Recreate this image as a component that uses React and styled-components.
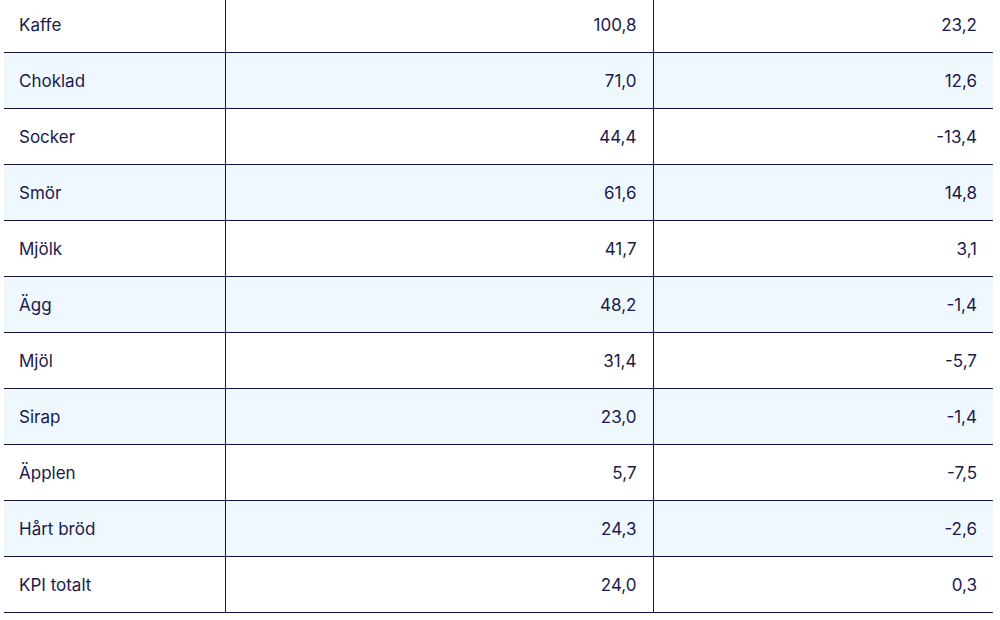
import React from "react";
import styled, { createGlobalStyle } from "styled-components";

const GlobalStyle = createGlobalStyle`
  body {
    margin: 0;
    background: #ffffff;
    font-family: Inter, "Noto Sans", sans-serif;
  }
`;

const Wrapper = styled.div`
  padding: 0 7px 0 4px;
  margin-top: -4px;
`;

const Table = styled.table`
  width: 989px;
  border-collapse: collapse;
  table-layout: fixed;
  color: #1b1a4b;
  font-size: 17px;
`;

const Row = styled.tr`
  height: 56px;
  background: ${(p) => (p.$striped ? "#eff8fe" : "#ffffff")};
  border-top: 1px solid #15133f;
  border-bottom: 1px solid #15133f;
`;

const Cell = styled.td`
  padding: 0 16px 0 15px;
  text-align: ${(p) => (p.$num ? "right" : "left")};
  vertical-align: middle;
  & + & {
    border-left: 1px solid #15133f;
  }
`;

const rows = [
  ["Kaffe", "100,8", "23,2"],
  ["Choklad", "71,0", "12,6"],
  ["Socker", "44,4", "-13,4"],
  ["Smör", "61,6", "14,8"],
  ["Mjölk", "41,7", "3,1"],
  ["Ägg", "48,2", "-1,4"],
  ["Mjöl", "31,4", "-5,7"],
  ["Sirap", "23,0", "-1,4"],
  ["Äpplen", "5,7", "-7,5"],
  ["Hårt bröd", "24,3", "-2,6"],
  ["KPI totalt", "24,0", "0,3"],
];

export default function App() {
  return (
    <>
      <GlobalStyle />
      <Wrapper>
        <Table>
          <colgroup>
            <col style={{ width: 221 }} />
            <col style={{ width: 428 }} />
            <col style={{ width: 340 }} />
          </colgroup>
          <tbody>
            {rows.map(([name, a, b], i) => (
              <Row key={name} $striped={i % 2 === 1}>
                <Cell>{name}</Cell>
                <Cell $num>{a}</Cell>
                <Cell $num>{b}</Cell>
              </Row>
            ))}
          </tbody>
        </Table>
      </Wrapper>
    </>
  );
}
